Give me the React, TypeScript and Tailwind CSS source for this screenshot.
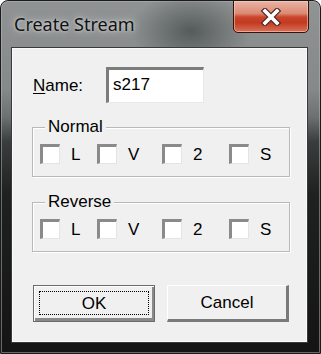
import React from "react";

const F = { fontFamily: '"Liberation Sans", Arial, sans-serif' };

function Check({ label, w }: { label: string; w?: string }) {
  return (
    <div className={`flex items-center ${w ?? ""}`}>
      <div className="w-[20px] h-[20px] bg-white border-t-[3px] border-l-[3px] border-r border-b border-t-[#8a8a8a] border-l-[#8a8a8a] border-r-[#e4e4e4] border-b-[#e4e4e4] shrink-0" />
      <span className="ml-[11px] text-[17px] leading-none text-black">{label}</span>
    </div>
  );
}

function Group({ title }: { title: string }) {
  return (
    <div className="relative w-[258px] h-[50px] border border-[#b9b9b9] shadow-[inset_1px_1px_0_#ffffff,1px_1px_0_#ffffff]">
      <span className="absolute left-[12px] -top-[11px] bg-[#f0f0f0] px-[3px] text-[17px] leading-[20px] text-black">
        {title}
      </span>
      <div className="flex pl-[7px] pt-[16px]">
        <Check label="L" w="w-[57px]" />
        <Check label="V" w="w-[65px]" />
        <Check label="2" w="w-[67px]" />
        <Check label="S" />
      </div>
    </div>
  );
}

export default function App() {
  return (
    <div
      className="relative w-[321px] h-[354px] rounded-t-[8px] border border-[#1b1b1b] flex flex-col overflow-hidden bg-[linear-gradient(180deg,#909394_0%,#85898a_25%,#6c7071_33%,#3a3d3e_40%,#1f2020_55%,#141414_100%)]"
      style={F}
    >
      <div className="absolute inset-0 rounded-t-[7px] border border-[#b8bbbc]/50 pointer-events-none" />
      <div className="relative h-[46px] flex items-start justify-between bg-[radial-gradient(ellipse_60px_40px_at_190px_30px,rgba(40,48,48,0.55),transparent)]">
        <span
          className="ml-[13px] mt-[11px] text-[18px] leading-[24px] text-[#111] [text-shadow:0_0_8px_rgba(255,255,255,0.7),0_0_3px_rgba(255,255,255,0.6)]"
          style={{ fontFamily: '"Noto Sans", "Open Sans", sans-serif' }}
        >
          Create Stream
        </span>
        <div className="-mt-px mr-[11px] w-[76px] h-[33px] rounded-b-[5px] border border-[#3a1208] bg-[linear-gradient(180deg,#e9b3a4_0%,#dc8a74_40%,#c9452b_52%,#c23a20_70%,#d9735a_100%)] shadow-[inset_0_0_0_1px_rgba(255,220,210,0.5)] flex items-center justify-center">
          <svg width="22" height="18" viewBox="0 0 22 18">
            <path d="M5 3 L17 15 M17 3 L5 15" stroke="#4a2a26" strokeWidth="6" strokeLinecap="square" fill="none" />
            <path d="M5 3 L17 15 M17 3 L5 15" stroke="#ffffff" strokeWidth="3.6" strokeLinecap="square" fill="none" />
          </svg>
        </div>
      </div>
      <div className="ml-[10px] mr-[12px] mb-[10px] flex-1 border border-[#3a3a3a] bg-[#f0f0f0] shadow-[inset_0_0_0_1px_#fafafa] flex flex-col pl-[20px]">
        <div className="flex items-center mt-[19px] h-[36px]">
          <span className="ml-[1px] w-[73px] text-[17px] leading-none text-black">
            <span className="underline underline-offset-[2px]">N</span>ame:
          </span>
          <div className="w-[98px] h-[36px] bg-white border-t-[3px] border-l-[3px] border-r border-b border-t-[#7c7c7c] border-l-[#7c7c7c] border-r-[#e8e8e8] border-b-[#e8e8e8] flex items-start pl-[4px] pt-[6px]">
            <span className="text-[17px] leading-none text-black">s217</span>
          </div>
        </div>
        <div className="mt-[24px]">
          <Group title="Normal" />
        </div>
        <div className="mt-[25px]">
          <Group title="Reverse" />
        </div>
        <div className="flex mt-[33px] gap-[12px] ml-[1px]">
          <div className="w-[122px] h-[37px] border border-[#6a6a6a] bg-[#f0f0f0] shadow-[inset_1px_1px_0_#ffffff,inset_-2px_-3px_0_#8a8a8a] flex items-start p-[5px] pb-[7px]">
            <div className="flex-1 h-[24px] border border-dotted border-black flex items-center justify-center">
              <span className="text-[17px] leading-none text-black">OK</span>
            </div>
          </div>
          <div className="w-[122px] h-[37px] border-t border-l border-[#ffffff] border-r-[3px] border-b-[3px] border-r-[#7a7a7a] border-b-[#7a7a7a] bg-[#f0f0f0] flex items-center justify-center">
            <span className="text-[17px] leading-none text-black">Cancel</span>
          </div>
        </div>
      </div>
    </div>
  );
}
